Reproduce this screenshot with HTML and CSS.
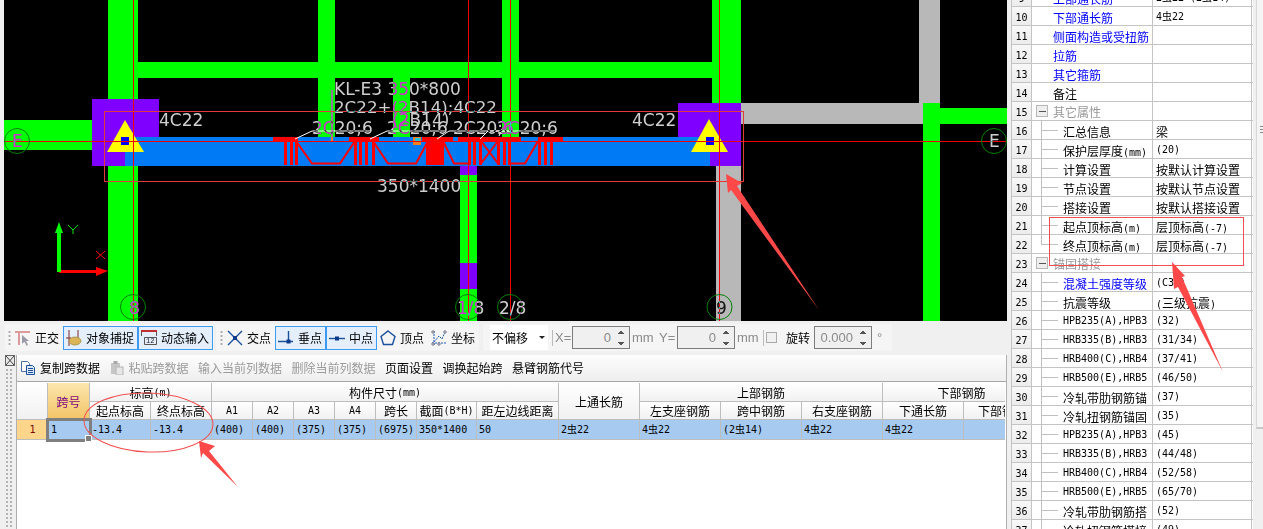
FILE: index.html
```html
<!DOCTYPE html>
<html lang="zh">
<head>
<meta charset="utf-8">
<title>梁平法表格</title>
<link rel="stylesheet" href="styles.css">
</head>
<body>
<div class="app">
  <main class="left">
    <div class="canvas">
      <svg class="cad" width="1003" height="321" viewBox="4 0 1003 321">
        <rect class="bg" x="4" y="0" width="1003" height="321"/>
        <g class="green">
          <rect x="108" y="0" width="30" height="321"/>
          <rect x="108" y="62" width="604" height="16"/>
          <rect x="318" y="0" width="17" height="137"/>
          <rect x="393" y="62" width="17" height="75"/>
          <rect x="502" y="0" width="17" height="137"/>
          <rect x="712" y="0" width="29" height="103"/>
          <rect x="4" y="120" width="88" height="30"/>
          <rect x="460" y="166" width="17" height="155"/>
          <rect x="923" y="103" width="17" height="218"/>
          <rect x="940" y="108" width="67" height="16"/>
        </g>
        <g class="grey">
          <rect x="919" y="0" width="21" height="103"/>
          <rect x="741" y="103" width="182" height="21"/>
          <rect x="716" y="166" width="25" height="155"/>
        </g>
        <g class="purple">
          <rect x="92" y="99" width="67" height="67"/>
          <rect x="678" y="103" width="63" height="63"/>
          <rect x="460" y="166" width="17" height="9"/>
          <rect x="460" y="263" width="17" height="26"/>
        </g>
        <rect class="blue" x="125" y="137" width="585" height="29"/>
        <g class="rebar">
          <rect x="273" y="137" width="25" height="4"/>
          <rect x="349" y="137" width="30" height="4"/>
          <rect x="422" y="137" width="31" height="4"/>
          <rect x="458" y="137" width="63" height="4"/>
          <rect x="538" y="137" width="25" height="4"/>
          <rect x="284" y="141" width="3" height="24"/>
          <rect x="290" y="141" width="3" height="24"/>
          <rect x="295" y="141" width="3" height="24"/>
          <rect x="354" y="141" width="3" height="24"/>
          <rect x="359" y="141" width="3" height="24"/>
          <rect x="365" y="141" width="3" height="24"/>
          <rect x="372" y="141" width="3" height="24"/>
          <rect x="426" y="141" width="18" height="24"/>
          <rect x="468" y="141" width="3" height="24"/>
          <rect x="473" y="141" width="3" height="24"/>
          <rect x="479" y="141" width="3" height="24"/>
          <rect x="497" y="141" width="3" height="24"/>
          <rect x="503" y="141" width="3" height="24"/>
          <rect x="508" y="141" width="3" height="24"/>
          <rect x="538" y="141" width="3" height="24"/>
          <rect x="544" y="141" width="3" height="24"/>
          <rect x="550" y="141" width="3" height="24"/>
        </g>
        <g class="tie">
          <polyline points="296,141 312,163.500 340,163.500 355,141"/>
          <polyline points="373,141 388,163.500 416,163.500 428,141"/>
          <polyline points="443,141 454,163.500 469,163.500"/>
          <polyline points="481,141 498,163.500"/>
          <polyline points="498,141 481,163.500"/>
          <polyline points="510,163.500 525,163.500 538,141"/>
        </g>
        <rect class="orange" x="413" y="137" width="8" height="8"/>
        <rect class="cyan" x="415" y="138" width="5" height="4"/>
        <g class="yellow">
          <polygon points="125,120 107,152 144,152"/>
          <polygon points="709,119 691,152 728,152"/>
        </g>
        <g class="navy">
          <rect x="121" y="137" width="8" height="8"/>
          <rect x="706" y="137" width="8" height="8"/>
        </g>
        <g class="leader">
          <polyline points="295,139 312,131 370,131"/>
          <polyline points="370,139 387,131 445,131"/>
          <polyline points="437,139 449,131 510,131"/>
          <polyline points="480,139 488,131 555,131"/>
        </g>
        <line class="mag" x1="332" y1="90" x2="332" y2="137"/>
        <rect class="orange" x="331" y="137" width="2" height="4"/>
        <g class="redline">
          <line x1="4" y1="141.500" x2="1007" y2="141.500"/>
          <line x1="133.500" y1="0" x2="133.500" y2="321"/>
          <line x1="468.500" y1="0" x2="468.500" y2="321"/>
          <line x1="510.500" y1="0" x2="510.500" y2="321"/>
          <line x1="719.500" y1="0" x2="719.500" y2="321"/>
        </g>
        <rect class="sel" x="104.500" y="111.500" width="639" height="70"/>
        <g class="axis-circle">
          <circle cx="17" cy="141" r="12.500"/>
          <circle cx="994" cy="141" r="12.500"/>
          <circle cx="133" cy="307" r="12.500"/>
          <circle cx="468" cy="307" r="12.500"/>
          <circle cx="510" cy="307" r="12.500"/>
          <circle cx="719.500" cy="307" r="12.500"/>
        </g>
        <g class="xaxis">
          <rect x="59" y="270" width="41" height="3"/>
          <polygon points="96,267 108,271 96,276"/>
          <path class="thin" d="M96 251 L105 259 M105 251 L96 259"/>
        </g>
        <g class="yaxis">
          <rect x="57" y="232" width="4" height="40"/>
          <polygon points="59,222 55,233 63,233"/>
          <path class="thin" d="M68 225 L73 230 L78 225 M73 230 L73 234"/>
        </g>
        <g class="xor">
          <text x="334" y="95">KL-E3 350*800</text>
          <text class="narrow" x="334" y="112.500">2C22+(2B14);4C22</text>
          <text x="392" y="126">(2B14)</text>
          <text x="159" y="125.500">4C22</text>
          <text x="632" y="125.500">4C22</text>
          <text x="312" y="134">2C20;6</text>
          <text x="387" y="134">2C20;6</text>
          <text x="453" y="134">2C20;6</text>
          <text x="497" y="134">2C20;6</text>
          <text x="377" y="192">350*1400</text>
          <text x="12" y="147">E</text>
          <text x="989" y="147">E</text>
          <text x="129" y="314">8</text>
          <text x="457" y="314">1/8</text>
          <text x="499" y="314">2/8</text>
          <text x="716" y="314">9</text>
        </g>
      </svg>
    </div>

    <div class="tb1">
      <div class="seg seg1">
        <i class="grip"></i>
        <div class="tool">
          <svg class="ic" width="16" height="16" viewBox="0 0 16 16"><path class="ic-pink" d="M0 1h15v2H0zM3 1h2v14H3z"/><path class="ic-grey" d="M7 5l7 6-3 0 2 4-1.500 .7-2-4-2.500 2z"/></svg>
          <span>正交</span>
        </div>
        <div class="tool on">
          <svg class="ic" width="16" height="16" viewBox="0 0 16 16"><path class="ic-line" d="M3 0v16M12 0v8M0 8h5"/><ellipse class="ic-gold" cx="9" cy="11" rx="6" ry="4"/></svg>
          <span>对象捕捉</span>
        </div>
        <div class="tool on">
          <svg class="ic" width="16" height="16" viewBox="0 0 16 16"><path class="ic-red" d="M0 1h16"/><path class="ic-dark" d="M.5 2v4M15.500 2v4M3.500 7.500h12v7h-12z"/><text class="ic-num" x="5" y="13">12</text></svg>
          <span>动态输入</span>
        </div>
      </div>
      <div class="seg seg2">
        <i class="grip"></i>
        <div class="tool">
          <svg class="ic" width="16" height="16" viewBox="0 0 16 16"><path class="ic-bl" d="M1 1l14 14M15 1L1 15"/><rect class="ic-fill" x="6" y="6" width="4" height="4"/></svg>
          <span>交点</span>
        </div>
        <div class="tool on">
          <svg class="ic" width="16" height="16" viewBox="0 0 16 16"><path class="ic-bl" d="M0 11.500h15M10.500 1v10"/><rect class="ic-fill" x="8.500" y="9.500" width="4" height="4"/></svg>
          <span>垂点</span>
        </div>
        <div class="tool on">
          <svg class="ic" width="16" height="16" viewBox="0 0 16 16"><path class="ic-bl" d="M0 8.500h16"/><rect class="ic-fill" x="6" y="6.500" width="4" height="4"/></svg>
          <span>中点</span>
        </div>
        <div class="tool">
          <svg class="ic" width="16" height="16" viewBox="0 0 16 16"><polygon class="ic-bl" points="8,1 15,6.500 12.500,14.500 3.500,14.500 1,6.500"/></svg>
          <span>顶点</span>
        </div>
        <div class="tool">
          <svg class="ic" width="16" height="16" viewBox="0 0 16 16"><path class="ic-dash" d="M3 1v14M1 13h14M3 12L8 6l3 3 3-7"/><circle class="ic-dot" cx="2" cy="2" r="1.200"/><circle class="ic-dot" cx="14" cy="2" r="1.200"/><circle class="ic-dot" cx="2" cy="14" r="1.200"/><circle class="ic-dot" cx="8" cy="14" r="1.200"/></svg>
          <span>坐标</span>
        </div>
      </div>
      <div class="seg seg3">
        <div class="combo"><span>不偏移</span><i class="caret"></i></div>
        <i class="sep"></i>
        <span class="lbl lblx">X=</span>
        <div class="spin"><span>0</span><i class="arrows"></i></div>
        <span class="lbl lblmm">mm</span>
        <span class="lbl lbly">Y=</span>
        <div class="spin"><span>0</span><i class="arrows"></i></div>
        <span class="lbl lblmm">mm</span>
        <i class="sep"></i>
        <i class="check"></i>
        <span class="rot">旋转</span>
        <div class="spin"><span>0.000</span><i class="arrows"></i></div>
        <span class="lbl deg">°</span>
      </div>
    </div>

    <div class="lower">
      <div class="dock">
        <svg class="dock-x" width="10" height="11" viewBox="0 0 10 11"><rect class="dx-box" x=".5" y=".5" width="9" height="10"/><path class="dx-x" d="M1 1l8 9M9 1l-8 9"/></svg>
        <div class="dots"></div>
      </div>
      <div class="sheet">
        <div class="tb2">
          <div class="act">
            <svg class="ic2" width="14" height="14" viewBox="0 0 14 14"><path class="doc1" d="M.5 .5h6l2 2v8h-8z"/><path class="doc2" d="M5.500 4.500h6l2 2v7h-8z"/><path class="docl" d="M7 7.500h5M7 9.500h5M7 11.500h5"/></svg>
            <span>复制跨数据</span>
          </div>
          <div class="act off">
            <svg class="ic2" width="14" height="14" viewBox="0 0 14 14"><rect class="clip" x="1" y="2" width="9" height="11"/><rect class="clip2" x="3.500" y="0" width="4" height="3"/><rect class="clip3" x="6" y="6" width="7" height="8"/></svg>
            <span>粘贴跨数据</span>
          </div>
          <div class="act off"><span>输入当前列数据</span></div>
          <div class="act off"><span>删除当前列数据</span></div>
          <div class="act"><span>页面设置</span></div>
          <div class="act"><span>调换起始跨</span></div>
          <div class="act"><span>悬臂钢筋代号</span></div>
        </div>
        <div class="grid-wrap">
          <div class="grid">
            <div class="h r2"></div>
            <div class="h r2 gold">跨号</div>
            <div class="h c2">标高<span class="m">(m)</span></div>
            <div class="h c7">构件尺寸<span class="m">(mm)</span></div>
            <div class="h r2">上通长筋</div>
            <div class="h c3">上部钢筋</div>
            <div class="h c2 clip-end">下部钢筋</div>
            <div class="h">起点标高</div>
            <div class="h">终点标高</div>
            <div class="h m">A1</div>
            <div class="h m">A2</div>
            <div class="h m">A3</div>
            <div class="h m">A4</div>
            <div class="h">跨长</div>
            <div class="h">截面<span class="m">(B*H)</span></div>
            <div class="h">距左边线距离</div>
            <div class="h">左支座钢筋</div>
            <div class="h">跨中钢筋</div>
            <div class="h">右支座钢筋</div>
            <div class="h">下通长筋</div>
            <div class="h">下部钢筋</div>
            <div class="rowno">1</div>
            <div class="d cur">1</div>
            <div class="d">-13.4</div>
            <div class="d">-13.4</div>
            <div class="d">(400)</div>
            <div class="d">(400)</div>
            <div class="d">(375)</div>
            <div class="d">(375)</div>
            <div class="d">(6975)</div>
            <div class="d">350*1400</div>
            <div class="d">50</div>
            <div class="d">2虫22</div>
            <div class="d">4虫22</div>
            <div class="d">(2虫14)</div>
            <div class="d">4虫22</div>
            <div class="d">4虫22</div>
            <div class="d"></div>
          </div>
        </div>
      </div>
    </div>
  </main>

  <aside class="panel">
    <div class="rows">
      <div class="prow"><span class="n">9</span><span class="pn link">上部通长筋</span><span class="pv m">2虫22+(2虫14)</span></div>
      <div class="prow"><span class="n">10</span><span class="pn link">下部通长筋</span><span class="pv m">4虫22</span></div>
      <div class="prow"><span class="n">11</span><span class="pn link">侧面构造或受扭筋</span><span class="pv"></span></div>
      <div class="prow"><span class="n">12</span><span class="pn link">拉筋</span><span class="pv"></span></div>
      <div class="prow"><span class="n">13</span><span class="pn link">其它箍筋</span><span class="pv"></span></div>
      <div class="prow"><span class="n">14</span><span class="pn top">备注</span><span class="pv"></span></div>
      <div class="prow"><span class="n">15</span><span class="pn group"><i class="tbox"></i>其它属性</span><span class="pv"></span></div>
      <div class="prow"><span class="n">16</span><span class="pn kid">汇总信息</span><span class="pv">梁</span></div>
      <div class="prow"><span class="n">17</span><span class="pn kid">保护层厚度<span class="m">(mm)</span></span><span class="pv m">(20)</span></div>
      <div class="prow"><span class="n">18</span><span class="pn kid">计算设置</span><span class="pv">按默认计算设置</span></div>
      <div class="prow"><span class="n">19</span><span class="pn kid">节点设置</span><span class="pv">按默认节点设置</span></div>
      <div class="prow"><span class="n">20</span><span class="pn kid">搭接设置</span><span class="pv">按默认搭接设置</span></div>
      <div class="prow"><span class="n">21</span><span class="pn kid">起点顶标高<span class="m">(m)</span></span><span class="pv">层顶标高<span class="m">(-7)</span></span></div>
      <div class="prow"><span class="n">22</span><span class="pn kid last">终点顶标高<span class="m">(m)</span></span><span class="pv">层顶标高<span class="m">(-7)</span></span></div>
      <div class="prow"><span class="n">23</span><span class="pn group"><i class="tbox"></i>锚固搭接</span><span class="pv"></span></div>
      <div class="prow"><span class="n">24</span><span class="pn kid link">混凝土强度等级</span><span class="pv m">(C30)</span></div>
      <div class="prow"><span class="n">25</span><span class="pn kid">抗震等级</span><span class="pv"><span class="m">(</span>三级抗震<span class="m">)</span></span></div>
      <div class="prow"><span class="n">26</span><span class="pn kid m">HPB235(A),HPB3</span><span class="pv m">(32)</span></div>
      <div class="prow"><span class="n">27</span><span class="pn kid m">HRB335(B),HRB3</span><span class="pv m">(31/34)</span></div>
      <div class="prow"><span class="n">28</span><span class="pn kid m">HRB400(C),HRB4</span><span class="pv m">(37/41)</span></div>
      <div class="prow"><span class="n">29</span><span class="pn kid m">HRB500(E),HRB5</span><span class="pv m">(46/50)</span></div>
      <div class="prow"><span class="n">30</span><span class="pn kid">冷轧带肋钢筋锚</span><span class="pv m">(37)</span></div>
      <div class="prow"><span class="n">31</span><span class="pn kid">冷轧扭钢筋锚固</span><span class="pv m">(35)</span></div>
      <div class="prow"><span class="n">32</span><span class="pn kid m">HPB235(A),HPB3</span><span class="pv m">(45)</span></div>
      <div class="prow"><span class="n">33</span><span class="pn kid m">HRB335(B),HRB3</span><span class="pv m">(44/48)</span></div>
      <div class="prow"><span class="n">34</span><span class="pn kid m">HRB400(C),HRB4</span><span class="pv m">(52/58)</span></div>
      <div class="prow"><span class="n">35</span><span class="pn kid m">HRB500(E),HRB5</span><span class="pv m">(65/70)</span></div>
      <div class="prow"><span class="n">36</span><span class="pn kid">冷轧带肋钢筋搭</span><span class="pv m">(52)</span></div>
      <div class="prow"><span class="n">37</span><span class="pn kid">冷轧扭钢筋搭接</span><span class="pv m">(49)</span></div>
    </div>
    <div class="scroll"><i class="thumbgrip"></i></div>
  </aside>

  <svg class="marks" width="1263" height="529" viewBox="0 0 1263 529">
    <ellipse class="m-line" cx="148.500" cy="422.500" rx="64.500" ry="29.500" transform="rotate(2 148.500 422.500)"/>
    <rect class="m-line" x="1049.500" y="217.500" width="194" height="48"/>
    <polygon class="m-arrow" points="199,441 215,446 209,451 238,487 203,453 201,458"/>
    <polygon class="m-arrow" points="726,174 742,183 737,186 819,310 731,190 728,193"/>
    <polygon class="m-arrow" points="1172,262 1185,276 1182,277 1223,372 1178,287 1174,289"/>
  </svg>
</div>
</body>
</html>
```

FILE: styles.css
```css
* { box-sizing: border-box; }
html, body { margin: 0; height: 100%; }
body {
  overflow: hidden;
  background: #f0f0f0;
  color: #000;
  font: 12px/16px "Noto Sans CJK SC", "Liberation Sans", sans-serif;
}
i { display: block; font-style: normal; }
.m { font-family: "DejaVu Sans Mono", "Noto Sans CJK SC", monospace; font-size: 10px; }

.app { position: relative; display: flex; width: 1263px; height: 529px; overflow: hidden; }
.left { width: 1008px; height: 529px; display: flex; flex-direction: column; flex: none; }

/* CAD canvas */
.canvas { height: 321px; padding-left: 4px; flex: none; }
.cad { display: block; }
.bg { fill: #000; }
.green rect { fill: #00ff00; }
.grey rect { fill: #b8b8b8; }
.purple rect { fill: #8000ff; }
.blue { fill: #007bf5; }
.rebar rect { fill: #ff0000; }
.tie polyline { fill: none; stroke: #ff0000; stroke-width: 2; }
.orange { fill: #f08020; }
.cyan { fill: #20c8d8; }
.yellow polygon { fill: #ffff00; }
.navy rect { fill: #0000ff; }
.leader polyline { fill: none; stroke: #fff; stroke-width: 1; }
.mag { stroke: #d040d0; stroke-width: 1.500; }
.redline line { stroke: #f00000; stroke-width: 1; }
.sel { fill: none; stroke: #e03a3a; stroke-width: 1; }
.axis-circle circle { fill: none; stroke: #008000; stroke-width: 1; }
.xaxis rect, .xaxis polygon { fill: #ff0000; }
.yaxis rect, .yaxis polygon { fill: #00ff00; }
.xaxis .thin { fill: none; stroke: #ff0000; stroke-width: 1; }
.yaxis .thin { fill: none; stroke: #00e000; stroke-width: 1; }
.xor { mix-blend-mode: difference; }
.xor text { fill: #cfcfcf; font: 17px "DejaVu Sans", sans-serif; }
.xor .narrow { font-size: 16.7px; }

/* main toolbar */
.tb1 { height: 34px; padding: 3px 0 0 5px; display: flex; gap: 2px; flex: none; }
.seg { height: 27px; display: flex; align-items: center; background: #f5f5f5; border-radius: 2px; }
.seg1 { width: 209px; padding-left: 3px; }
.seg2 { width: 263px; padding-left: 4px; }
.seg3 { width: 409px; margin-left: 2px; padding-left: 7px; }
.grip {
  width: 3px; height: 15px; margin-right: 1px;
  background: radial-gradient(circle, #aaa 1px, transparent 1.2px) 0 0 / 3px 4px;
}
.tool {
  display: flex; align-items: center; gap: 4px;
  height: 24px; padding: 0 3px 0 2px;
  border: 1px solid transparent;
  white-space: nowrap;
}
.tool.on { background: #e4effb; border-color: #3b9bf2; }
.ic { flex: none; display: block; }
.ic-pink { fill: #dc9a9a; }
.ic-grey { fill: #9a9aa8; }
.ic-line { fill: none; stroke: #7a2a2a; stroke-width: 1; }
.ic-gold { fill: #d9b458; stroke: #9c8436; stroke-width: .7; }
.ic-red { stroke: #c03030; stroke-width: 2; fill: none; }
.ic-dark { fill: none; stroke: #555; stroke-width: 1; }
.ic-num { font: 7px "Liberation Mono", monospace; fill: #222; }
.ic-bl { fill: none; stroke: #1a4f9c; stroke-width: 1.400; }
.ic-fill { fill: #0c3a8a; }
.ic-dash { fill: none; stroke: #1a5fb0; stroke-width: 1; stroke-dasharray: 2 1; }
.ic-dot { fill: #fff; stroke: #335; stroke-width: .7; }

.combo {
  width: 58px; height: 25px; background: #fff;
  display: flex; align-items: center; justify-content: space-between;
  padding: 0 3px 0 2px;
}
.caret { border: 3px solid transparent; border-top: 3px solid #222; border-bottom: 0; }
.sep { width: 1px; height: 16px; background: #bbb; margin: 0 2px 0 4px; flex: none; }
.lbl { color: #8a8a8a; font-family: "Liberation Sans", sans-serif; font-size: 13px; }
.lblx { width: 17px; }
.lbly { width: 18px; margin-left: 5px; }
.lblmm { width: 22px; margin-left: 2px; }
.spin {
  position: relative;
  width: 58px; height: 23px;
  border: 1px solid #7d7d7d;
  background: #f0f0f0;
  color: #8a8a8a;
  padding-right: 18px;
  text-align: right;
  font: 13px/21px "Liberation Sans", sans-serif;
  flex: none;
}
.arrows {
  position: absolute; right: 4px; top: 4px; width: 8px; height: 14px;
  background:
    linear-gradient(135deg, transparent 50%, #555 50%) 0 0 / 4px 3px no-repeat,
    linear-gradient(225deg, transparent 50%, #555 50%) 4px 0 / 4px 3px no-repeat,
    linear-gradient(45deg, transparent 50%, #555 50%) 0 11px / 4px 3px no-repeat,
    linear-gradient(315deg, transparent 50%, #555 50%) 4px 11px / 4px 3px no-repeat;
}
.check { width: 11px; height: 11px; border: 1px solid #aaa; background: #f0f0f0; flex: none; }
.rot { margin: 0 4px 0 9px; }
.deg { margin-left: 5px; }

/* lower area */
.lower { flex: 1; display: flex; padding-left: 5px; min-height: 0; }
.dock { width: 11px; flex: none; }
.dock-x { display: block; }
.dx-box { fill: #e8e8e8; stroke: #666; stroke-width: 1; }
.dx-x { fill: none; stroke: #444; stroke-width: 1; }
.dots {
  width: 8px; height: 160px; margin-top: 2px;
  background: radial-gradient(circle, #b4b4b4 1px, transparent 1.2px) 0 0 / 4px 4px;
}
.sheet {
  width: 991px; display: flex; flex-direction: column;
  border-left: 1px solid #b0b0b0; border-right: 1px solid #b0b0b0;
  background: #fff;
}
.tb2 {
  height: 27px; flex: none;
  padding-left: 4px;
  display: flex; align-items: center; gap: 9.500px;
  background: linear-gradient(#fdfdfd, #eeeeee);
  border-bottom: 1px solid #a8a8a8;
  white-space: nowrap;
}
.act { display: flex; align-items: center; gap: 5px; }
.act.off { color: #9b9b9b; }
.ic2 { display: block; flex: none; }
.doc1 { fill: #fff; stroke: #4a6fa8; stroke-width: 1; }
.doc2 { fill: #dbe8fb; stroke: #1e4f9e; stroke-width: 1; }
.docl { fill: none; stroke: #1e4f9e; stroke-width: 1; }
.clip { fill: #c6c6c6; }
.clip2 { fill: #a8a8a8; }
.clip3 { fill: #e6e6e6; stroke: #b4b4b4; stroke-width: 1; }

/* data grid */
.grid-wrap { flex: 1; overflow: hidden; padding-top: 1px; margin-right: 1px; }
.grid {
  display: grid;
  width: 1024px;
  grid-template-columns: 31px 42px 61px 61px 41px 41px 41px 41px 41px 60px 82px 81px 81px 81px 81px 81px 77px;
  grid-template-rows: 19px 18px 20px;
}
.h {
  display: flex; align-items: center; justify-content: center;
  padding-top: 1px;
  background: linear-gradient(#ffffff, #f1f1f1);
  border-right: 1px solid #bdbdbd;
  border-bottom: 1px solid #bdbdbd;
  white-space: nowrap; overflow: hidden;
}
.h.m { font-size: 10px; }
.r2 { grid-row: span 2; }
.c2 { grid-column: span 2; }
.c3 { grid-column: span 3; }
.c7 { grid-column: span 7; }
.gold { background: linear-gradient(#fce6ad, #f3c468); color: #7a007a; }
.rowno {
  background: #fdd68c; color: #800000;
  font: 10px/20px "DejaVu Sans Mono", monospace; text-align: center;
  border-bottom: 1px solid #bdbdbd;
}
.d {
  background: #a6caf0;
  border-right: 1px solid #bdbdbd;
  border-bottom: 1px solid #bdbdbd;
  padding-left: 2px;
  font: 10px/20px "DejaVu Sans Mono", "Noto Sans CJK SC", monospace;
  white-space: nowrap; overflow: hidden;
}
.d.cur { position: relative; overflow: visible; padding-left: 3px; outline: 3px solid #7f7f7f; outline-offset: -1px; }
.d.cur::after {
  content: ""; position: absolute; right: -3px; bottom: -3px;
  width: 5px; height: 5px; background: #7f7f7f; border: 1px solid #fff;
}

/* property panel */
.panel { flex: 1; display: flex; padding-left: 4px; overflow: hidden; min-width: 0; }
.rows { width: 241px; margin-top: -12px; flex: none; background: #fff; }
.prow {
  display: grid;
  grid-template-columns: 20px 121px 99px;
  height: 19px;
  border-bottom: 1px solid #c4c4c4;
  border-left: 1px solid #c4c4c4;
  white-space: nowrap;
  margin-left: -1px;
}
.prow > span { line-height: 21px; overflow: hidden; border-right: 1px solid #c4c4c4; }
.n {
  background: linear-gradient(#f8f8f8, #ececec);
  text-align: center;
  font: 10px/20px "DejaVu Sans Mono", monospace;
}
.pn { padding-left: 21px; }
.pv { padding-left: 3px; }
.prow > .pv.m, .prow > .pn.m { line-height: 19px; }
.link { color: #0000ff; }
.group { color: #999; padding-left: 4px; display: flex; align-items: center; gap: 5px; }
.tbox {
  width: 12px; height: 12px; flex: none;
  border: 1px solid #b8b8b8;
  background: linear-gradient(#555, #555) 50% 50% / 7px 1px no-repeat, #eeeeee;
}
.kid {
  padding-left: 31px;
  background:
    linear-gradient(#c0c0c0, #c0c0c0) 9px 0 / 1px 100% no-repeat,
    linear-gradient(#c0c0c0, #c0c0c0) 10px 9px / 16px 1px no-repeat;
}
.kid.last {
  background:
    linear-gradient(#c0c0c0, #c0c0c0) 9px 0 / 1px 10px no-repeat,
    linear-gradient(#c0c0c0, #c0c0c0) 10px 9px / 16px 1px no-repeat;
}
.scroll {
  flex: 1; height: 429px;
  background: #f4f4f4;
  border-left: 1px solid #d8d8d8;
  border-bottom: 2px solid #c8c8c8;
  margin-left: 3px;
  padding-top: 126px;
}
.thumbgrip {
  width: 4px; height: 7px; margin-left: 3px;
  background: repeating-linear-gradient(#888 0 1px, transparent 1px 3px);
}

/* hand-drawn annotations */
.marks { position: absolute; left: 0; top: 0; pointer-events: none; }
.m-line { fill: none; stroke: #f25050; stroke-width: 1; }
.m-arrow { fill: #ff4848; }
```
